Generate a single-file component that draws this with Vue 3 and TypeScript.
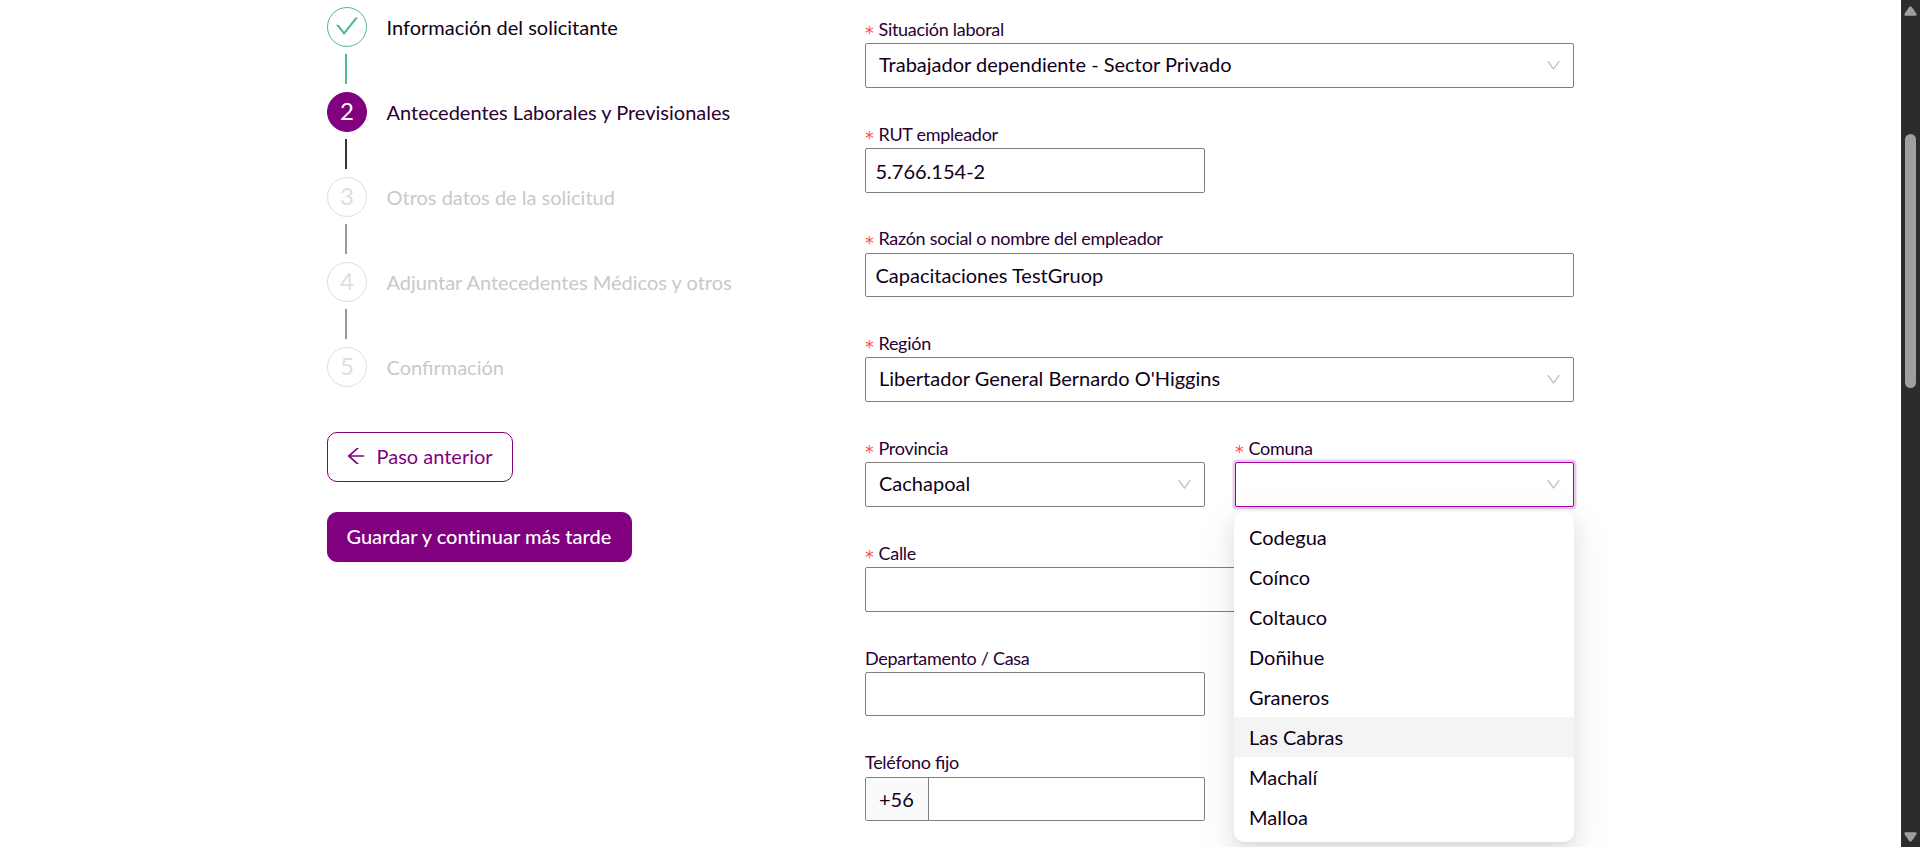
<script setup lang="ts">
type StepState = 'done' | 'active' | 'pending'

interface Step {
  title: string
  state: StepState
}

interface Field {
  label: string
  required?: boolean
  kind: 'select' | 'input'
  value?: string
  wide?: boolean
  short?: boolean
  raised?: boolean
  focused?: boolean
  prefix?: string
  options?: string[]
}

const steps: Step[] = [
  { title: 'Información del solicitante', state: 'done' },
  { title: 'Antecedentes Laborales y Previsionales', state: 'active' },
  { title: 'Otros datos de la solicitud', state: 'pending' },
  { title: 'Adjuntar Antecedentes Médicos y otros', state: 'pending' },
  { title: 'Confirmación', state: 'pending' },
]

const comunas = ['Codegua', 'Coínco', 'Coltauco', 'Doñihue', 'Graneros', 'Las Cabras', 'Machalí', 'Malloa']
const hovered = 'Las Cabras'

const fields: Field[] = [
  { label: 'Situación laboral', required: true, kind: 'select', value: 'Trabajador dependiente - Sector Privado', wide: true },
  { label: 'RUT empleador', required: true, kind: 'input', value: '5.766.154-2' },
  { label: 'Razón social o nombre del empleador', required: true, kind: 'input', value: 'Capacitaciones TestGruop', wide: true, short: true, raised: true },
  { label: 'Región', required: true, kind: 'select', value: "Libertador General Bernardo O'Higgins", wide: true },
  { label: 'Provincia', required: true, kind: 'select', value: 'Cachapoal' },
  { label: 'Comuna', required: true, kind: 'select', focused: true, options: comunas },
  { label: 'Calle', required: true, kind: 'input', wide: true },
  { label: 'Departamento / Casa', kind: 'input', short: true },
  { label: 'Teléfono fijo', kind: 'input', short: true, raised: true, prefix: '+56' },
]
</script>

<template>
  <div class="page">
    <main class="content">
      <aside class="sidebar">
        <ol class="steps">
          <li v-for="(step, i) in steps" :key="step.title" class="step" :class="step.state">
            <div class="rail">
              <span class="circle">
                <svg v-if="step.state === 'done'" class="check" viewBox="64 64 896 896">
                  <path d="M912 190h-69.9c-9.8 0-19.1 4.5-25.1 12.2L404.7 724.5 207 474a32 32 0 00-25.1-12.2H112c-6.7 0-10.4 7.7-6.3 12.9l273.9 347c12.8 16.2 37.4 16.2 50.3 0l488.4-618.9c4.1-5.1.4-12.8-6.3-12.8z" />
                </svg>
                <template v-else>{{ i + 1 }}</template>
              </span>
              <span v-if="i < steps.length - 1" class="line"></span>
            </div>
            <span class="title">{{ step.title }}</span>
          </li>
        </ol>
        <button class="btn outline" type="button">
          <svg class="arrow" viewBox="64 64 896 896">
            <path d="M872 474H286.9l350.2-304c5.6-4.9 2.2-14-5.2-14h-88.5c-3.9 0-7.6 1.4-10.5 3.9L155 487.8a31.96 31.96 0 000 48.3L535.1 866c1.5 1.3 3.3 2 5.2 2h91.5c7.4 0 10.8-9.2 5.2-14L286.9 550H872c4.4 0 8-3.6 8-8v-60c0-4.4-3.6-8-8-8z" />
          </svg>
          <span>Paso anterior</span>
        </button>
        <button class="btn primary" type="button">Guardar y continuar más tarde</button>
      </aside>

      <form class="form">
        <div v-for="f in fields" :key="f.label" class="field" :class="{ wide: f.wide, solo: !f.wide && f.kind === 'input' }">
          <label class="label" :class="{ raised: f.raised }"><span v-if="f.required" class="star">*</span>{{ f.label }}</label>
          <div class="control" :class="[f.kind, { short: f.short, focused: f.focused }]">
            <span v-if="f.prefix" class="prefix">{{ f.prefix }}</span>
            <span class="value">{{ f.value }}</span>
            <svg v-if="f.kind === 'select'" class="chevron" viewBox="64 64 896 896">
              <path d="M884 256h-75c-5.1 0-9.9 2.5-12.9 6.6L512 654.2 227.9 262.6c-3-4.1-7.8-6.6-12.9-6.6h-75c-6.5 0-10.3 7.4-6.5 12.7l352.6 486.1c12.8 17.6 39 17.6 51.7 0l352.6-486.1c3.9-5.3.1-12.7-6.4-12.7z" />
            </svg>
            <ul v-if="f.options" class="dropdown">
              <li v-for="o in f.options" :key="o" class="option" :class="{ hover: o === hovered }">{{ o }}</li>
            </ul>
          </div>
        </div>
      </form>
    </main>

    <div class="scrollbar">
      <svg class="sb-arrow" viewBox="0 0 13 10"><path d="M5.2 1Q6.500-.6 7.8 1L12.3 7.6Q13.2 9.7 11.3 9.7H1.7Q-.2 9.7.7 7.6Z" /></svg>
      <div class="thumb"></div>
      <svg class="sb-arrow down" viewBox="0 0 13 10"><path d="M5.2 1Q6.500-.6 7.8 1L12.3 7.6Q13.2 9.7 11.3 9.7H1.7Q-.2 9.7.7 7.6Z" /></svg>
    </div>
  </div>
</template>

<style>
html,
body {
  margin: 0;
  overflow: hidden;
}
</style>

<style scoped>
* {
  box-sizing: border-box;
}

.page {
  display: flex;
  height: 847px;
  overflow: hidden;
  background: #fff;
  color: #10001a;
  font: 20px/30px Lato, sans-serif;
}

.content {
  flex: 1;
  display: flex;
  padding-left: 327px;
}

.sidebar {
  width: 538px;
  padding-top: 7px;
  display: flex;
  flex-direction: column;
  align-items: flex-start;
}

.steps {
  list-style: none;
  margin: 0;
  padding: 0;
}

.step {
  display: flex;
  gap: 19.5px;
  height: 85px;
}

.rail {
  width: 40px;
}

.circle {
  display: flex;
  align-items: center;
  justify-content: center;
  width: 40px;
  height: 40px;
  border: 1px solid #dedede;
  border-radius: 50%;
  color: #dedede;
  font-size: 24px;
  line-height: 36px;
  padding-bottom: 3px;
}

.line {
  display: block;
  width: 2px;
  height: 30px;
  margin: 7px 0 0 18px;
  background: #999;
}

.title {
  padding-top: 5px;
  color: #c9c9c9;
  white-space: nowrap;
}

.done .circle {
  border-color: #52b69a;
  padding-bottom: 2px;
}

.check {
  flex: none;
  width: 24px;
  height: 24px;
  fill: #52b69a;
}

.done .line {
  background: #52b69a;
}

.done .title {
  color: #10001a;
}

.active .circle {
  border-color: #800080;
  background: #800080;
  color: #fff;
}

.active .line {
  background: #333;
}

.active .title {
  color: #2b0033;
}

.btn {
  display: flex;
  align-items: center;
  height: 50px;
  padding: 0 19px 2px 18.5px;
  border: 1px solid #800080;
  border-radius: 10px;
  font: 20px/30px Lato, sans-serif;
  white-space: nowrap;
}

.outline {
  gap: 10.5px;
  width: 186px;
  padding-left: 18px;
  background: #fff;
  color: #800080;
}

.arrow {
  flex: none;
  width: 20px;
  height: 20px;
  fill: #800080;
}

.primary {
  width: 305px;
  margin-top: 30px;
  background: #800080;
  color: #fff;
  font-weight: 500;
  font-variant-ligatures: none;
  box-shadow: 0 2px 0 rgba(0, 0, 0, 0.02);
}

.form {
  width: 709px;
  margin-top: 13px;
  display: grid;
  grid-template-columns: 340px 339px;
  grid-template-rows: 105px 105px 104px 105px 105px 105px 105px 105px;
  column-gap: 30px;
}

.field {
  min-width: 0;
}

.wide {
  grid-column: 1 / 3;
}

.solo {
  grid-column: 1;
}

.label {
  display: flex;
  height: 30px;
  line-height: 33px;
  font-size: 18px;
  letter-spacing: -0.29px;
  font-feature-settings: "liga" 1;
  color: #2b0033;
  white-space: nowrap;
}

.raised {
  line-height: 31px;
}

.star {
  width: 13.5px;
  color: #ff4d4f;
  font: 17.5px/41px "DejaVu Sans", sans-serif;
}

.control {
  position: relative;
  display: flex;
  align-items: center;
  height: 45px;
  border: 1px solid #808080;
  border-radius: 2px;
  background: #fff;
}

.short {
  height: 44px;
}

.value {
  flex: 1;
  padding-left: 9.5px;
}

.select .value {
  padding: 0 0 3px 13px;
}

.chevron {
  width: 15px;
  height: 15px;
  margin: 0 12.5px 0 0;
  fill: #bfbfbf;
}

.prefix {
  align-self: stretch;
  width: 63px;
  padding-left: 13px;
  border-right: 1px solid #808080;
  background: #fafafa;
  line-height: 43px;
}

.focused {
  border-color: #a600a6;
  box-shadow: 0 0 0 2.5px rgba(128, 0, 128, 0.2);
}

.dropdown {
  position: absolute;
  z-index: 2;
  top: 49px;
  left: -2px;
  width: 340px;
  height: 330px;
  margin: 0;
  padding: 5px 0;
  list-style: none;
  background: #fff;
  border-radius: 10px;
  box-shadow:
    0 7.5px 20px 0 rgba(0, 0, 0, 0.08),
    0 3.75px 7.5px -5px rgba(0, 0, 0, 0.12),
    0 11.25px 35px 10px rgba(0, 0, 0, 0.05);
}

.option {
  height: 40px;
  padding-left: 15px;
  line-height: 40px;
}

.hover {
  background: #f4f4f4;
}

.scrollbar {
  width: 19px;
  display: flex;
  flex-direction: column;
  align-items: center;
  padding: 6px 0 5px;
  background: #2c2c2c;
}

.sb-arrow {
  width: 13px;
  height: 10px;
  fill: #9f9f9f;
}

.down {
  margin-top: auto;
  transform: rotate(180deg);
}

.thumb {
  width: 11px;
  height: 254px;
  margin-top: 118px;
  border-radius: 6px;
  background: #9f9f9f;
}
</style>
